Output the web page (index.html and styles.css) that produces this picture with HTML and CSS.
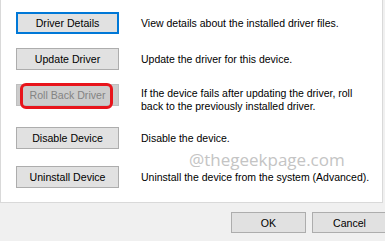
FILE: index.html
```html
<!DOCTYPE html>
<html>
<head>
<meta charset="utf-8">
<link rel="stylesheet" href="styles.css">
</head>
<body>
<div class="panel">
  <div class="row r1">
    <button class="btn default">Driver Details</button>
    <div class="desc">View details about the installed driver files.</div>
  </div>
  <div class="row r2">
    <button class="btn">Update Driver</button>
    <div class="desc">Update the driver for this device.</div>
  </div>
  <div class="row r3">
    <div class="btnwrap">
      <button class="btn disabled">Roll Back Driver</button>
      <span class="highlight"></span>
    </div>
    <div class="desc two">If the device fails after updating the driver, roll back to the previously installed driver.</div>
  </div>
  <div class="row r4">
    <button class="btn">Disable Device</button>
    <div class="desc">Disable the device.</div>
  </div>
  <div class="row r5">
    <button class="btn">Uninstall Device</button>
    <div class="desc">Uninstall the device from the system (Advanced).</div>
  </div>
  <div class="watermark">@thegeekpage.com</div>
</div>
<div class="footer">
  <button class="btn dlg">OK</button>
  <button class="btn dlg">Cancel</button>
</div>
</body>
</html>
```
FILE: styles.css
```css
html, body {
  margin: 0;
  padding: 0;
  background: #f0f0f0;
  width: 385px;
  height: 241px;
  overflow: hidden;
  font-family: "Liberation Sans", Arial, sans-serif;
  font-size: 10.5px;
  color: #000;
}
.panel {
  position: relative;
  box-sizing: border-box;
  width: 383px;
  height: 203px;
  background: #fff;
  border: 1px solid #d9d9d9;
  border-top: none;
  padding-top: 12px;
  padding-left: 15px;
}
.row {
  display: grid;
  grid-template-columns: 103px auto;
  column-gap: 22px;
  align-items: start;
}
.r1 { height: 36px; }
.r2 { height: 36px; }
.r3 { height: 43px; }
.r4 { height: 39px; }
.btn {
  box-sizing: border-box;
  width: 103px;
  height: 22px;
  margin: 0;
  padding: 0;
  background: #e1e1e1;
  border: 1px solid #adadad;
  font-family: "Liberation Sans", Arial, sans-serif;
  font-size: 10.6px;
  color: #000;
  text-align: center;
}
.btn.default {
  border: 2px solid #0078d7;
}
.btn.disabled {
  background: #cccccc;
  border-color: #bfbfbf;
  color: #838383;
}
.btnwrap {
  position: relative;
  width: 103px;
  height: 22px;
}
.highlight {
  position: absolute;
  left: 4px;
  top: -1px;
  width: 93px;
  height: 26px;
  box-sizing: border-box;
  border: 3px solid #e8141b;
  border-radius: 6px;
}
.desc {
  line-height: 22px;
  white-space: nowrap;
}
.desc.two {
  white-space: normal;
  width: 215px;
  line-height: 13px;
  padding-top: 3px;
}
.watermark {
  position: absolute;
  left: 188px;
  top: 148px;
  font-family: "Open Sans", "Noto Sans", sans-serif;
  font-size: 17px;
  color: #c4c4c4;
}
.footer {
  display: flex;
  gap: 6px;
  padding-left: 231px;
  padding-top: 9px;
}
.btn.dlg {
  flex: none;
  width: 75px;
  height: 21px;
}
```
